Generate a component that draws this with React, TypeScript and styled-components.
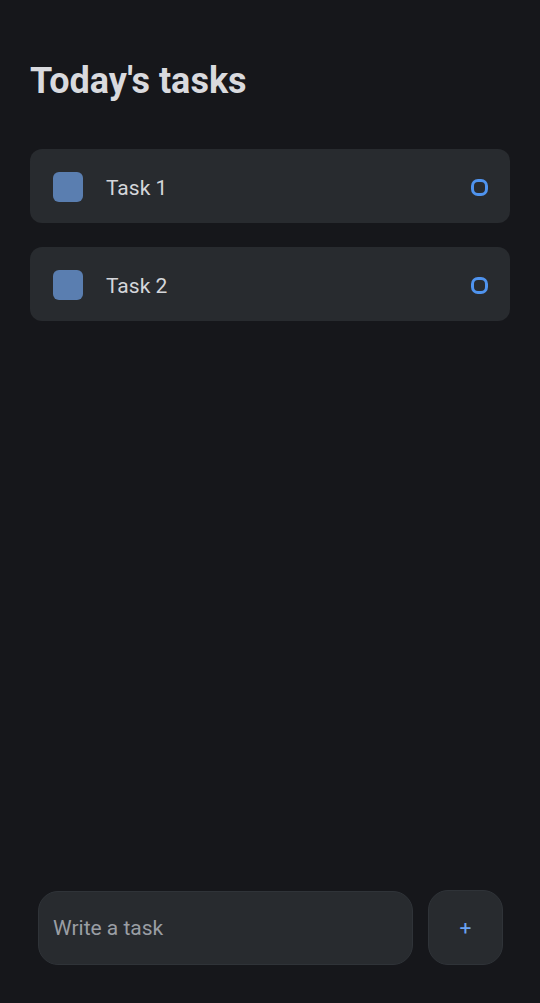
import React, { useState } from 'react';
import styled, { createGlobalStyle } from 'styled-components';

const GlobalStyle = createGlobalStyle`
  * {
    box-sizing: border-box;
  }

  body {
    margin: 0;
    background: #16171b;
    font-family: Roboto, "Liberation Sans", sans-serif;
  }
`;

const Page = styled.div`
  display: flex;
  flex-direction: column;

  min-height: 100vh;
  padding: 60px 30px 38px;
`;

const Title = styled.h1`
  margin: 0 0 47px 0;

  font-size: 36px;
  font-weight: 700;
  color: #d9dade;
`;

const TaskList = styled.div`
  display: flex;
  flex-direction: column;
  gap: 24px;

  flex: 1;
`;

const TaskCard = styled.div`
  display: flex;
  align-items: center;
  gap: 23px;

  height: 74px;
  padding: 2px 22px 0 23px;

  background: #282b2f;
  border-radius: 12px;
`;

const Square = styled.div`
  width: 30px;
  height: 30px;

  background: #5a7eb0;
  border-radius: 6px;
`;

const TaskText = styled.span`
  flex: 1;
  padding-top: 2px;

  font-size: 21px;
  color: #d4d6da;
`;

const Ring = styled.div`
  width: 17px;
  height: 17px;

  border: 3px solid #4f93ee;
  border-radius: 7px;
`;

const Form = styled.div`
  display: flex;
  align-items: center;
  gap: 15px;

  padding: 0 7px 0 8px;
`;

const Input = styled.input`
  flex: 1;

  height: 74px;
  padding: 0 14px;

  font-family: Roboto, "Liberation Sans", sans-serif;
  font-size: 21px;
  color: #d4d6da;

  background: #282b2f;
  border: 1px solid #2f3338;
  border-radius: 20px;
  outline: none;

  &::placeholder {
    color: #9a9ea4;
  }
`;

const AddButton = styled.button`
  display: flex;
  align-items: center;
  justify-content: center;

  width: 75px;
  height: 75px;

  font-family: Roboto, "Liberation Sans", sans-serif;
  font-size: 21px;
  color: #6aa2f2;

  background: #282b2f;
  border: 1px solid #2f3338;
  border-radius: 20px;
  cursor: pointer;
`;

export default function App() {
  const [tasks] = useState(['Task 1', 'Task 2']);

  return (
    <>
      <GlobalStyle />
      <Page>
        <Title>Today's tasks</Title>

        <TaskList>
          {tasks.map((task) => (
            <TaskCard key={task}>
              <Square />
              <TaskText>{task}</TaskText>
              <Ring />
            </TaskCard>
          ))}
        </TaskList>

        <Form>
          <Input placeholder="Write a task" />
          <AddButton>+</AddButton>
        </Form>
      </Page>
    </>
  );
}
